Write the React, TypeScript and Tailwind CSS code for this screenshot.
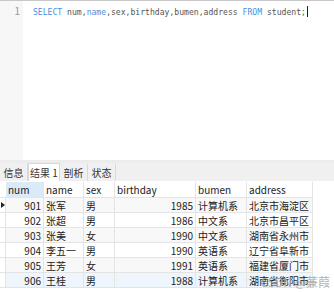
const rows = [
  { num: 901, name: "张军", sex: "男", birthday: 1985, bumen: "计算机系", address: "北京市海淀区" },
  { num: 902, name: "张超", sex: "男", birthday: 1986, bumen: "中文系", address: "北京市昌平区" },
  { num: 903, name: "张美", sex: "女", birthday: 1990, bumen: "中文系", address: "湖南省永州市" },
  { num: 904, name: "李五一", sex: "男", birthday: 1990, bumen: "英语系", address: "辽宁省阜新市" },
  { num: 905, name: "王芳", sex: "女", birthday: 1991, bumen: "英语系", address: "福建省厦门市" },
  { num: 906, name: "王桂", sex: "男", birthday: 1988, bumen: "计算机系", address: "湖南省衡阳市" },
];

const cell = "border-r border-b border-[#e4e4e4] px-[2px] pt-[1px] overflow-hidden whitespace-nowrap";

function Editor() {
  return (
    <div className="flex h-[160px] border-t border-[#c8c8c8]">
      <div className="w-[23px] shrink-0 bg-[#f7f7f7] pr-[3px] pt-[3px] text-right text-[10px] leading-[14px] text-[#999]">
        1
      </div>
      <div
        className="pl-[10px] pt-[3px] text-[8.1px] leading-[14px] text-[#555]"
        style={{ fontFamily: '"DejaVu Sans Mono", monospace' }}
      >
        <span className="text-[#4a90e2]">SELECT</span> num,
        <span className="text-[#4a90e2]">name</span>,sex,birthday,bumen,address{" "}
        <span className="text-[#4a90e2]">FROM</span> student;
        <span className="ml-[1px] inline-block h-[11px] w-px translate-y-[2px] bg-[#222]" />
      </div>
    </div>
  );
}

function Tabs() {
  const tabs = ["信息", "结果 1", "剖析", "状态"];
  return (
    <div className="flex h-[21px] items-end border-t-[3px] border-[#ececec] bg-[#f0f0f0] text-[10px] text-[#333]">
      {tabs.map((t, i) => (
        <div
          key={t}
          className={
            i === 1
              ? "flex h-[18px] w-[32px] items-center justify-center border-x border-t border-[#d6d6d6] bg-white"
              : "flex h-[17px] w-[28px] items-center justify-center border-r border-[#d9d9d9]"
          }
        >
          {t}
        </div>
      ))}
    </div>
  );
}

function Grid() {
  return (
    <div className="bg-white pt-[1px] text-[10px] text-[#222]">
      <div className="grid grid-cols-[6px_38px_40px_31px_81px_51px_66px]">
        <div className="h-[16px] border-b border-[#e4e4e4]" />
        <div className={cell + " bg-[#dbeaf8] leading-[14px]"}>num</div>
        <div className={cell + " leading-[14px]"}>name</div>
        <div className={cell + " leading-[14px]"}>sex</div>
        <div className={cell + " leading-[14px]"}>birthday</div>
        <div className={cell + " leading-[14px]"}>bumen</div>
        <div className={cell + " leading-[14px]"}>address</div>
        {rows.map((r, i) => {
          const bg = i === 5 ? "bg-[#eef5fc]" : i % 2 === 0 ? "bg-[#f8f8f8]" : "bg-white";
          return [
            <div key={r.num + "s"} className="relative h-[15px] border-r border-b border-[#e4e4e4] bg-white">
              {i === 0 && (
                <span className="absolute left-[1px] top-[4px] h-0 w-0 border-y-[3px] border-l-[4px] border-y-transparent border-l-[#222]" />
              )}
            </div>,
            <div key={r.num + "a"} className={cell + " " + bg + " text-right leading-[13px]"}>{r.num}</div>,
            <div key={r.num + "b"} className={cell + " " + bg + " leading-[13px]"}>{r.name}</div>,
            <div key={r.num + "c"} className={cell + " " + bg + " leading-[13px]"}>{r.sex}</div>,
            <div key={r.num + "d"} className={cell + " " + bg + " text-right leading-[13px]"}>{r.birthday}</div>,
            <div key={r.num + "e"} className={cell + " " + bg + " leading-[13px]"}>{r.bumen}</div>,
            <div key={r.num + "f"} className={cell + " " + bg + " leading-[13px]"}>{r.address}</div>,
          ];
        })}
      </div>
    </div>
  );
}

export default function App() {
  return (
    <div
      className="relative h-[292px] w-[334px] overflow-hidden bg-white"
      style={{ fontFamily: '"Noto Sans CJK SC", "Liberation Sans", sans-serif' }}
    >
      <Editor />
      <Tabs />
      <Grid />
      <div className="absolute bottom-[1px] right-[4px] text-[12px] text-[#a9a9a9]/90">CSDN @蒹葭</div>
    </div>
  );
}
